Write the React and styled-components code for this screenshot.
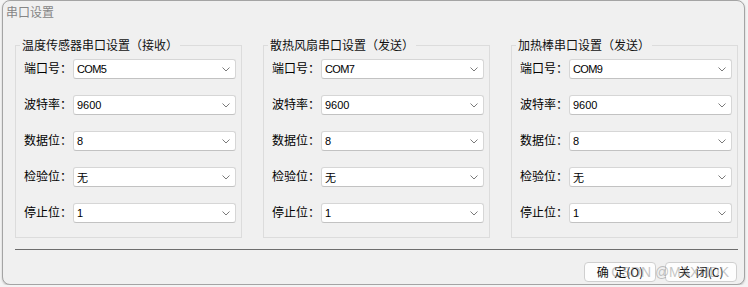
import React from "react";
import styled, { createGlobalStyle } from "styled-components";

// ── Global ───────────────────────────────────────────────────────────────────

const GlobalStyle = createGlobalStyle`
  html, body {
    margin: 0;
    background: #f4f4f4;
  }
  body {
    font-family: "Noto Sans CJK SC", "Noto Sans", sans-serif;
    color: #000;
  }
`;

// ── Window ───────────────────────────────────────────────────────────────────

const Window = styled.div`
  position: relative;
  margin-left: 2px;
  width: 743px;
  height: 285px;
  box-sizing: border-box;
  border: 1px solid #a4a4a4;
  border-radius: 8px;
  background: #f0f0f0;
  box-shadow: 0 1px 2px rgba(0, 0, 0, 0.22);
  display: flex;
  flex-direction: column;
`;

const Title = styled.div`
  padding: 3px 0 0 3px;
  height: 16px;
  line-height: 16px;
  font-size: 12px;
  color: #858585;
`;

const Body = styled.div`
  padding: 0 6px 0 12px;
  display: flex;
  flex-direction: column;
`;

const GroupRow = styled.div`
  display: flex;
  gap: 21px;
  margin-top: 17px;
`;

// ── Group box ────────────────────────────────────────────────────────────────

const Group = styled.fieldset`
  margin: 0;
  min-width: 0;
  width: 227px;
  box-sizing: border-box;
  border: 1px solid #dcdcdc;
  padding: 6px 5px 14px 8px;
  display: flex;
  flex-direction: column;
  gap: 16px;
`;

const Legend = styled.legend`
  margin-left: -4px;
  padding: 0 2px;
  font-size: 12px;
  line-height: 16px;
  color: #111;
`;

const Row = styled.div`
  display: flex;
  align-items: center;
  height: 20px;
`;

const Label = styled.span`
  flex: none;
  width: 49px;
  font-size: 12px;
  line-height: 16px;
  margin-top: -2px;
`;

const Combo = styled.div`
  flex: 1;
  height: 20px;
  box-sizing: border-box;
  border: 1px solid #d6d6d6;
  border-bottom-color: #c2c2c2;
  border-radius: 3px;
  background: #fff;
  padding: 0 5px 0 3px;
  display: flex;
  align-items: center;
  justify-content: space-between;
  font-family: "Liberation Sans", "Noto Sans CJK SC", sans-serif;
  font-size: 11px;
  letter-spacing: ${({ $tight }) => ($tight ? "-0.6px" : "0")};
`;

const Chevron = () => (
  <svg width="8" height="5" viewBox="0 0 8 5">
    <path d="M0.5 0.5 L4 4 L7.5 0.5" fill="none" stroke="#7a7a7a" strokeWidth="1" />
  </svg>
);

// ── Footer ───────────────────────────────────────────────────────────────────

const Separator = styled.div`
  margin-top: 11px;
  height: 1px;
  background: #6d6d6d;
`;

const ButtonRow = styled.div`
  display: flex;
  justify-content: flex-end;
  gap: 9px;
  margin-top: 12px;
  padding-right: 1px;
`;

const Button = styled.button`
  width: 72px;
  height: 20px;
  padding: 0;
  box-sizing: border-box;
  border: 1px solid #cfcfcf;
  border-radius: 4px;
  background: #fdfdfd;
  font-family: "Noto Sans CJK SC", sans-serif;
  font-size: 12px;
  line-height: 18px;
  color: #111;
  white-space: pre;
`;

const Watermark = styled.div`
  position: absolute;
  right: 15px;
  top: 263px;
  font-family: "Liberation Sans", sans-serif;
  font-size: 14px;
  line-height: 16px;
  color: rgba(140, 140, 140, 0.5);
  pointer-events: none;
`;

// ── Data ─────────────────────────────────────────────────────────────────────

const groups = [
  { title: "温度传感器串口设置（接收）", port: "COM5" },
  { title: "散热风扇串口设置（发送）", port: "COM7" },
  { title: "加热棒串口设置（发送）", port: "COM9" },
];

const fields = (port) => [
  { label: "端口号：", value: port, tight: true },
  { label: "波特率：", value: "9600" },
  { label: "数据位：", value: "8" },
  { label: "检验位：", value: "无" },
  { label: "停止位：", value: "1" },
];

// ── Component ────────────────────────────────────────────────────────────────

export default function App() {
  return (
    <>
      <GlobalStyle />
      <Window>
        <Title>串口设置</Title>
        <Body>
          <GroupRow>
            {groups.map((g) => (
              <Group key={g.title}>
                <Legend>{g.title}</Legend>
                {fields(g.port).map((f) => (
                  <Row key={f.label}>
                    <Label>{f.label}</Label>
                    <Combo $tight={f.tight}>
                      <span>{f.value}</span>
                      <Chevron />
                    </Combo>
                  </Row>
                ))}
              </Group>
            ))}
          </GroupRow>
          <Separator />
          <ButtonRow>
            <Button>{"确  定(O)"}</Button>
            <Button>{"关  闭(C)"}</Button>
          </ButtonRow>
        </Body>
        <Watermark>CSDN @MAXHDK</Watermark>
      </Window>
    </>
  );
}
